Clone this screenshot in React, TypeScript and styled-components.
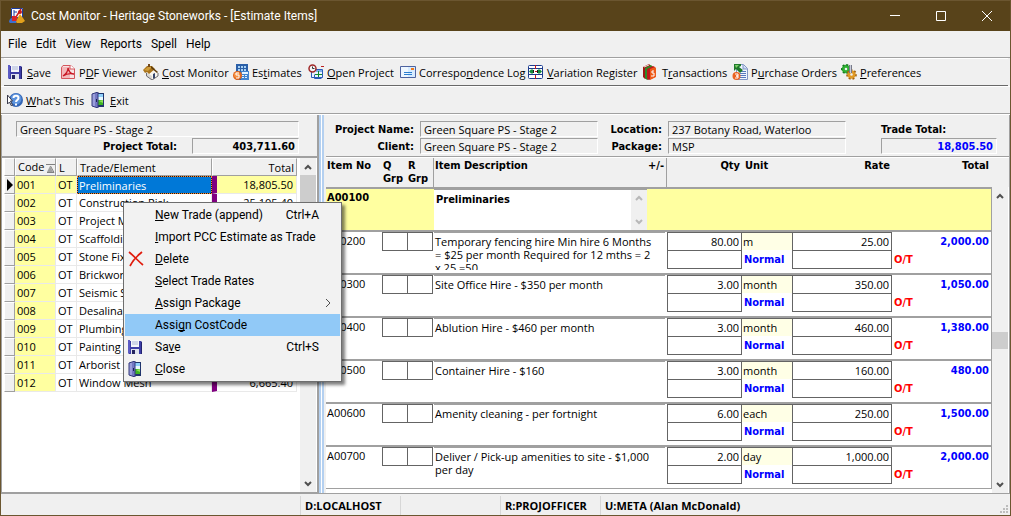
import React from 'react';
import styled, { createGlobalStyle, css } from 'styled-components';

const UI = 'Roboto, "Open Sans", sans-serif';
const GRID = '"Open Sans", "Noto Sans", sans-serif';
const BOLD = '"DejaVu Sans Condensed", "DejaVu Sans", sans-serif';

const Global = createGlobalStyle`
  * { box-sizing: border-box; }
  html, body, #root { height: 100%; }
  body { margin: 0; background: #f0f0f0; color: #000; font-family: ${GRID}; font-size: 11px; line-height: 13px; }
  button, input, textarea { font: inherit; color: inherit; margin: 0; padding: 0; border: 0; background: none; border-radius: 0; }
  textarea { resize: none; display: block; }
  svg { display: block; flex: none; }
  u { text-decoration: underline; text-decoration-thickness: 1px; text-underline-offset: 1px; text-decoration-skip-ink: none; }
`;

/* ---------- icons ---------- */

const SaveIcon = () => (
  <svg width="14" height="16" viewBox="0 0 14 16">
    <path d="M0 1h1l1 1h11l1 1v12H1l-1-1z" fill="#3d3da6" />
    <path d="M0 1h2v13H0z" fill="#5b5bc4" />
    <path d="M3 1h8v7H3z" fill="#f4f6fb" />
    <path d="M4 3h6M4 5h6" stroke="#a9b4d6" />
    <path d="M3 10h8v5H3z" fill="#dfe3ee" />
    <path d="M4 11h3v4H4z" fill="#23235f" />
    <path d="M13 3h1v12h-1z" fill="#23236f" />
  </svg>
);

const DoorIcon = () => (
  <svg width="14" height="16" viewBox="0 0 14 16">
    <path d="M3 1h10v14H3z" fill="#20346c" />
    <path d="M6 2h6v7H6z" fill="#8fd0fb" />
    <path d="M6 5h6v3H6z" fill="#e8f8ff" />
    <path d="M6 8h6v5H6z" fill="#3fb524" />
    <path d="M8 9l4-1v3z" fill="#8fe35a" />
    <path d="M1 2l6-2v16l-6-2z" fill="#7478c4" />
    <path d="M1 2l3-1v14l-3-1z" fill="#9a9ddb" />
    <path d="M1 2l6-2v16l-6-2z" fill="none" stroke="#343a7c" />
    <path d="M5 7h1v3H5z" fill="#1d2252" />
  </svg>
);

const PdfIcon = () => (
  <svg width="16" height="16" viewBox="0 0 16 16">
    <path d="M3 1h8l4 4v9l-1 1H1V4z" fill="#f7e3e3" />
    <path d="M1 3h9v11H1z" fill="#f3b7b9" />
    <path d="M3 1.500h8l3.500 3.500v9.500h-13v-11z" fill="none" stroke="#d4555c" />
    <path d="M10 1v4h5" fill="#fff" stroke="#d4555c" />
    <path d="M3 12c3-2 5-5 5-8 1 4 3 6 6 6-4-1-8 0-11 2z" fill="none" stroke="#c81824" strokeWidth="1.300" />
  </svg>
);

const HouseIcon = () => (
  <svg width="16" height="16" viewBox="0 0 16 16">
    <path d="M3 8l5-5 7 6v3l-6 4-6-4z" fill="#f8f5ee" />
    <path d="M3 8l6 4v4l-6-4z" fill="#d9d6d2" />
    <path d="M0 6l4-4h5l3 3-6 5-2-2-2 1z" fill="#a8731b" />
    <path d="M1 6l4-3h4L5 7z" fill="#cf9c38" />
    <path d="M8 2l7 6-1 1-6-5z" fill="#5b3a0c" />
    <path d="M10 10l2-1v5l-2 1z" fill="#35456a" />
    <path d="M5 0h2v3H5z" fill="#73491a" />
    <path d="M3.500 9v3l5.500 4 6-4V9" fill="none" stroke="#6b6b70" />
  </svg>
);

const EstimateIcon = () => (
  <svg width="16" height="16" viewBox="0 0 16 16">
    <path d="M3 0h12v16H3z" fill="#2a5fa8" />
    <path d="M5 2h2v2H5zM8 2h2v2H8zM11 2h2v2h-2zM5 5h2v2H5zM8 5h2v2H8zM11 5h2v2h-2z" fill="#a8d2f4" />
    <path d="M8 7h8v9H8z" fill="#3f82cf" />
    <path d="M9 8h6v2H9zM9 11h2v1H9zM12 11h2v1h-2zM9 13h2v1H9zM12 13h2v1h-2z" fill="#e2f2ff" />
    <circle cx="4.500" cy="11.500" r="4.500" fill="#e3661c" />
    <circle cx="4" cy="11" r="3" fill="#f59245" />
    <path d="M6 9H3v2h3v3H3" fill="none" stroke="#fff" />
  </svg>
);

const OpenIcon = () => (
  <svg width="16" height="16" viewBox="0 0 16 16">
    <path d="M3.500 5.500h11v8h-11z" fill="#eaf4ff" stroke="#2a5bb8" />
    <path d="M8 6h6v2H8z" fill="#7fb0ee" />
    <path d="M10.500 7v6M7 10.500h7" stroke="#128a2c" />
    <path d="M6.500 10.500v4h7" fill="none" stroke="#2a5bb8" />
    <circle cx="4.500" cy="4.500" r="3.500" fill="#f4f4f4" stroke="#a02828" strokeWidth="1.500" />
    <path d="M4.500 2.500v2h2" fill="none" stroke="#333" />
    <path d="M13 2.500h3" stroke="#b22" />
  </svg>
);

const MailIcon = () => (
  <svg width="16" height="12" viewBox="0 0 16 12">
    <path d="M.500.500h15v11H.500z" fill="#d6ebff" stroke="#4d63a0" />
    <path d="M1 1h7v10H1z" fill="#eef7ff" />
    <path d="M4 6.500h8M4 8.500h8" stroke="#2b7fd0" />
    <path d="M11 2h3v2h-3z" fill="#f07a1c" />
  </svg>
);

const VariationIcon = () => (
  <svg width="15" height="14" viewBox="0 0 15 14">
    <rect x=".500" y=".500" width="14" height="13" rx="1" fill="#fff" stroke="#1d3c8f" />
    <path d="M0 3.500h15M0 9.500h15" stroke="#1d3c8f" />
    <path d="M7.500 0v4M7.500 10v4" stroke="#c4161c" />
    <path d="M1 6.500l2-2h2v4H3zM14 6.500l-2-2h-2v4h2z" fill="#148a3c" />
    <path d="M5 5h1v3H5zM9 5h1v3H9z" fill="#1a1a1a" />
    <path d="M7 6h2v1H7z" fill="#c4161c" />
  </svg>
);

const BooksIcon = () => (
  <svg width="13" height="16" viewBox="0 0 13 16">
    <path d="M0 3l6-3 2 2v10l-6 3-2-2z" fill="#a41414" />
    <path d="M2 4l6-3 2 2v10l-6 3-2-2z" fill="#2e8a26" />
    <path d="M4 5l6-3 2 1v10l-6 3-2-1z" fill="#c01818" />
    <path d="M7 5l5-2 1 1v9l-6 3z" fill="#ee5a18" />
    <path d="M11 7H9v2h2v3H8" fill="none" stroke="#fff" />
    <path d="M1 3l5-2" stroke="#f0e4d8" />
  </svg>
);

const OrderIcon = () => (
  <svg width="16" height="16" viewBox="0 0 16 16">
    <path d="M4.500.500h7l4 4v11h-11z" fill="#f1f6ff" stroke="#8094c4" />
    <path d="M11 1v4h4" fill="#c9d7f2" stroke="#8094c4" />
    <path d="M8 7.500h6M8 9.500h6M8 11.500h6M8 13.500h6" stroke="#5878bc" />
    <path d="M2 0h7v2L7 3l4 3-3 3-4-4-2 2z" fill="#1f7a2a" />
    <path d="M3 1h4L4 4z" fill="#7fd06a" />
    <circle cx="4.500" cy="12" r="4" fill="#ea6220" />
    <path d="M3 10h3v2H4h2v2H3" fill="none" stroke="#fff" />
  </svg>
);

const GearsIcon = () => (
  <svg width="16" height="16" viewBox="0 0 16 16">
    <circle cx="5" cy="5" r="2.800" fill="none" stroke="#2fb034" strokeWidth="3" />
    <circle cx="5" cy="5" r="4.300" fill="none" stroke="#167a20" strokeWidth="1.500" strokeDasharray="2 2" />
    <circle cx="10.500" cy="10.500" r="2.800" fill="none" stroke="#e09a24" strokeWidth="3" />
    <circle cx="10.500" cy="10.500" r="4.600" fill="none" stroke="#a4620c" strokeWidth="1.500" strokeDasharray="2 2" />
    <path d="M8 1h3v8H8z" fill="#777a88" />
    <path d="M9 1h1v8H9z" fill="#c9ccda" />
  </svg>
);

const HelpIcon = () => (
  <svg width="16" height="16" viewBox="0 0 16 16">
    <circle cx="9" cy="8" r="7" fill="#3264b4" />
    <circle cx="9" cy="7" r="5.500" fill="#5b92dc" />
    <path d="M6.500 6c0-3 5-3 5 0 0 2-2.500 2-2.500 4M9 11.500v2" fill="none" stroke="#fff" strokeWidth="2" />
    <path d="M.500 3v9l2-2 2 4 1-1-2-4h2z" fill="#fff" stroke="#3a3a4a" />
  </svg>
);

const DeleteIcon = () => (
  <svg width="16" height="16" viewBox="0 0 16 16">
    <path d="M1 1c5 4 9 9 14 13M14 1C9 5 5 9 2 15" fill="none" stroke="#e01b0c" strokeWidth="1.700" />
  </svg>
);

const AppIcon = () => (
  <svg width="16" height="16" viewBox="0 0 16 16">
    <path d="M2 0h12v9H2z" fill="#fff" />
    <path d="M2.500.500h11v9h-11z" fill="none" stroke="#1b3da0" />
    <path d="M5 2v6M5 4h3" stroke="#1b3da0" />
    <path d="M12 1L7 9" stroke="#c81c1c" strokeWidth="1.500" />
    <circle cx="11" cy="4" r="2" fill="#c81c1c" />
    <path d="M0 14c0-5 7-6 8-1l-1 2H1z" fill="#3c6fd0" />
    <path d="M3 8h5v5H3z" fill="#d8262a" />
    <path d="M7 14l2-5 2-3 3 4 2 3-3 2H8z" fill="#e3a21c" />
  </svg>
);

const Chevron = ({ d, color = '#505050' }: { d: 'up' | 'down' | 'right'; color?: string }) => {
  const path = { up: 'M1 6l3-3 3 3', down: 'M1 2l3 3 3-3', right: 'M2 0l4 4-4 4' }[d];
  return (
    <svg width="8" height="8" viewBox="0 0 8 8">
      <path d={path} fill="none" stroke={color} strokeWidth={d === 'right' ? 1 : 2} />
    </svg>
  );
};

/* ---------- window frame ---------- */

const Window = styled.div`
  min-height: 100%;
  display: flex;
  flex-direction: column;
  border: 1px solid #6b5630;
  background: #f0f0f0;
`;

const TitleBar = styled.header`
  height: 30px;
  display: flex;
  align-items: center;
  gap: 6px;
  padding-left: 8px;
  background: #58431a;
  color: #fff;
  font-family: ${UI};
`;

const Title = styled.h1`
  flex: 1;
  margin: 0;
  font-size: 12px;
  font-weight: 400;
`;

const CaptionButtons = styled.div`
  display: flex;
`;

const CaptionButton = styled.button`
  width: 46px;
  height: 30px;
  display: flex;
  align-items: center;
  justify-content: center;
`;

const MenuBar = styled.nav`
  height: 27px;
  display: flex;
  align-items: center;
  gap: 9px;
  padding-left: 7px;
  border-bottom: 1px solid #a0a0a0;
  font-family: ${UI};
  font-size: 12px;
`;

const ToolBar = styled.div<{ $last?: boolean }>`
  height: 28px;
  display: flex;
  align-items: center;
  margin: ${p => (p.$last ? '0' : '0 2px 0 3px')};
  padding-left: ${p => (p.$last ? '6px' : '4px')};
  border-top: 1px solid #fff;
  border-bottom: 1px solid ${p => (p.$last ? '#a0a0a0' : '#696969')};
`;

const ToolButton = styled.button<{ $w: number }>`
  width: ${p => p.$w}px;
  display: flex;
  align-items: center;
  gap: 3px;
  white-space: nowrap;
`;

const IconSlot = styled.span`
  width: 16px;
  flex: none;
  display: flex;
`;

const Accel = ({ children }: { children: string }) => {
  const [before, rest] = children.split('_');
  if (rest === undefined) return <span>{before}</span>;
  return (
    <span>
      {before}
      <u>{rest[0]}</u>
      {rest.slice(1)}
    </span>
  );
};

/* ---------- panes ---------- */

const Body = styled.main`
  flex: 1;
  display: flex;
  position: relative;
  border-top: 1px solid #fff;
`;

const LeftPane = styled.section`
  width: 318px;
  flex: none;
  display: flex;
  flex-direction: column;
  border-left: 1px solid #a0a0a0;
  border-right: 2px solid #a0a0a0;
`;

const Splitter = styled.div`
  width: 5px;
  flex: none;
  background: #fff;
  border: 2px solid #b4d0f0;
  border-width: 0 2px;
`;

const RightPane = styled.section`
  flex: 1;
  min-width: 0;
  display: flex;
  flex-direction: column;
  padding-left: 2px;
  border-right: 1px solid #a0a0a0;
`;

const Sunken = styled.output<{ $tone?: string }>`
  display: block;
  height: 16px;
  padding: 0 3px;
  line-height: 15px;
  white-space: nowrap;
  border: 1px solid;
  border-color: #a0a0a0 #fff #fff #a0a0a0;
  ${p =>
    p.$tone &&
    css`
      font-family: ${BOLD};
      font-weight: 700;
      text-align: right;
      color: ${p.$tone};
    `}
`;

const Caption = styled.label`
  font-family: ${BOLD};
  font-weight: 700;
  text-align: right;
  white-space: nowrap;
`;

const LeftHead = styled.div`
  height: 41px;
  display: grid;
  grid-template-columns: 1fr 107px;
  grid-template-rows: 16px 16px;
  gap: 1px 15px;
  align-items: center;
  padding: 6px 18px 0 14px;
  & > :first-child { grid-column: 1 / 3; }
`;

const RightHead = styled.div`
  height: 41px;
  display: flex;
  justify-content: space-between;
  padding: 6px 12px 0 8px;
`;

const FieldGrid = styled.div`
  display: grid;
  grid-template-columns: 80px 178px 58px 178px;
  grid-template-rows: 16px 16px;
  gap: 1px 6px;
  align-items: center;
`;

const TradeTotal = styled.div`
  width: 116px;
  display: grid;
  grid-template-rows: 16px 16px;
  gap: 1px;
  align-items: center;
  ${Caption} { text-align: left; }
`;

const Scroll = styled.div`
  width: 16px;
  margin-right: 1px;
  flex: none;
  display: flex;
  flex-direction: column;
  align-items: center;
  background: #f0f0f0;
`;

const ScrollButton = styled.button`
  width: 16px;
  height: 17px;
  flex: none;
  display: flex;
  align-items: center;
  justify-content: center;
`;

const Track = styled.div<{ $before: number; $thumb: number }>`
  flex: 1;
  width: 16px;
  display: flex;
  flex-direction: column;
  &::before { content: ''; flex: ${p => p.$before} 0 0; }
  &::after { content: ''; flex: ${p => 100 - p.$before} 0 0; }
  & > span { height: ${p => p.$thumb}px; background: #cdcdcd; }
`;

/* ---------- trade list ---------- */

const ListArea = styled.div`
  flex: 1;
  display: flex;
  border-top: 2px solid #a0a0a0;
  border-bottom: 1px solid #a0a0a0;
  background: #fff;
  padding-left: 2px;
`;

const ListBody = styled.div`
  flex: 1;
`;

const TradeTable = styled.table`
  width: 293px;
  table-layout: fixed;
  border-collapse: separate;
  border-spacing: 0;
  white-space: nowrap;
  th, td { height: 18px; padding: 0 2px; overflow: hidden; }
`;

const HeadCell = styled.th<{ $right?: boolean }>`
  font-weight: 400;
  text-align: ${p => (p.$right ? 'right' : 'left')};
  background: #f0f0f0;
  border: 1px solid;
  border-color: #fff #a0a0a0 #a0a0a0 #fff;
  svg { display: inline-block; margin-left: 2px; vertical-align: middle; }
`;

const Indicator = styled.td`
  && { padding: 0; }
  background: #f0f0f0;
  border: 1px solid;
  border-color: #fff #a0a0a0 #a0a0a0 #fff;
`;

const Cell = styled.td<{ $yellow?: boolean; $right?: boolean }>`
  background: ${p => (p.$yellow ? '#ffffa0' : '#fff')};
  border-right: 1px solid #e9e9e9;
  border-bottom: 1px solid #e9e9e9;
  ${p =>
    p.$right &&
    css`
      && { padding-right: 3px; }
      text-align: right;
      border-left: 5px solid #800080;
    `}
`;

const PickedCell = styled.td`
  && { padding: 0 1px; }
  background:
    linear-gradient(#0078d7, #0078d7) padding-box,
    linear-gradient(#1d1d1d, #1d1d1d) border-box;
  color: #fff;
  border: 1px dotted #ff8728;
`;

/* ---------- estimate items ---------- */

const Items = styled.div`
  flex: 1;
  display: flex;
  flex-direction: column;
  background: #fff;
  border-top: 1px solid #a0a0a0;
`;

const ItemsScroller = styled.div`
  flex: 1;
  display: flex;
`;

const cols = css`
  display: grid;
  grid-template-columns: 56px 25px 26px 1fr 75px 50px 100px 99px;
`;

const HeadRow = styled.div`
  ${cols}
  height: 30px;
  padding-right: 18px;
  background: #f0f0f0;
  border-top: 1px solid #fff;
  font-family: ${BOLD};
  font-weight: 700;
  & > span { padding: 1px 2px 0 1px; }
`;

const HeadDesc = styled.span`
  display: flex;
  justify-content: space-between;
  border: 1px solid #a0a0a0;
  border-width: 0 1px;
`;

const RightText = styled.span`
  text-align: right;
`;

const UnitHead = styled.span`
  && { padding-left: 3px; }
`;

const ItemList = styled.div`
  flex: 1;
  min-width: 0;
  margin-bottom: 4px;
  border-right: 1px solid #a0a0a0;
  border-bottom: 1px solid #a0a0a0;
`;

const Desc = styled.div`
  display: flex;
  background: #fff;
  margin: 0 2px 0 1px;
  border-top: 1px solid #a0a0a0;
`;

const ItemRow = styled.div<{ $picked?: boolean }>`
  ${cols}
  height: 43px;
  border-top: 2px solid #a0a0a0;
  background: ${p => (p.$picked ? '#ffffa0' : '#fff')};
  ${Desc} { margin-right: ${p => (p.$picked ? '20px' : '2px')}; }
`;

const ItemNo = styled.span<{ $bold?: boolean }>`
  padding: 2px 0 0 1px;
  ${p => p.$bold && css`font-family: ${BOLD}; font-weight: 700;`}
`;

const Box = styled.input`
  width: 100%;
  height: 19px;
  padding: 0 2px;
  border: 1px solid #646464;
  background: #fff;
  text-align: right;
`;

const Grp = styled(Box)`
  width: 26px;
`;

const Stack = styled.div`
  display: flex;
  flex-direction: column;
  ${Box} + ${Box} { margin-top: -1px; }
`;

const UnitStack = styled(Stack)`
  margin: 0 -1px 0 0;
`;

const Unit = styled.input`
  width: 100%;
  height: 18px;
  padding: 0 1px;
  background: #ffffe6;
  border-top: 1px solid #646464;
`;

const Tag = styled.span<{ $color: string }>`
  height: 18px;
  padding: 3px 2px 0;
  font-family: ${BOLD};
  font-weight: 700;
  color: ${p => p.$color};
`;

const Amount = styled(Tag)`
  text-align: right;
`;

const DescText = styled.textarea<{ $bold?: boolean }>`
  flex: 1;
  min-width: 0;
  height: 37px;
  padding: 2px 1px 0;
  overflow: hidden;
  white-space: pre;
  ${p => p.$bold && css`font-family: ${BOLD}; font-weight: 700; padding: 3px 2px 0;`}
`;

const MiniScroll = styled.span`
  width: 16px;
  display: flex;
  flex-direction: column;
  justify-content: space-between;
  align-items: center;
  padding: 4px 0;
  background: #f0f0f0;
`;

/* ---------- context menu ---------- */

const Menu = styled.ul`
  position: absolute;
  left: 122px;
  top: 87px;
  width: 219px;
  margin: 0;
  padding: 1px;
  list-style: none;
  white-space: nowrap;
  background: #f2f2f2;
  border: 1px solid #6e6e6e;
  box-shadow: 3px 3px 3px rgba(0, 0, 0, 0.5);
  font-family: ${UI};
  font-size: 12px;
`;

const MenuItem = styled.button<{ $hot?: boolean }>`
  width: 100%;
  height: 22px;
  display: grid;
  grid-template-columns: 27px 1fr auto 16px;
  align-items: center;
  padding: 0 5px 0 3px;
  text-align: left;
  background: ${p => (p.$hot ? '#91c9f7' : 'transparent')};
`;

const SubMark = styled.span`
  padding-left: 5px;
`;

/* ---------- status bar ---------- */

const Status = styled.footer`
  height: 22px;
  display: flex;
  border-top: 1px solid #a0a0a0;
  font-weight: 700;
`;

const StatusPart = styled.span<{ $w?: number }>`
  ${p => (p.$w ? `width: ${p.$w}px` : 'flex: 1')};
  padding: 3px 4px 0;
  margin-top: 2px;
  border-right: ${p => (p.$w ? '1px solid #d7d7d7' : '0')};
`;

const Grip = styled.svg`
  align-self: flex-end;
  margin: 0 2px 2px 0;
`;

/* ---------- data ---------- */

const tools: [string, number, React.ReactNode][] = [
  ['_Save', 52, <SaveIcon />],
  ['P_DF Viewer', 83, <PdfIcon />],
  ['_Cost Monitor', 90, <HouseIcon />],
  ['Es_timates', 75, <EstimateIcon />],
  ['_Open Project', 92, <OpenIcon />],
  ['Correspo_ndence Log', 128, <MailIcon />],
  ['_Variation Register', 115, <VariationIcon />],
  ['T_ransactions', 89, <BooksIcon />],
  ['P_urchase Orders', 109, <OrderIcon />],
  ['_Preferences', 80, <GearsIcon />],
];

const trades: [string, string, string][] = [
  ['001', 'Preliminaries', '18,805.50'],
  ['002', 'Construction Risk', '25,105.40'],
  ['003', 'Project M', ''],
  ['004', 'Scaffolding', ''],
  ['005', 'Stone Fix', ''],
  ['006', 'Brickwork', ''],
  ['007', 'Seismic S', ''],
  ['008', 'Desalinat', ''],
  ['009', 'Plumbing', ''],
  ['010', 'Painting', ''],
  ['011', 'Arborist', ''],
  ['012', 'Window Mesh', '6,665.40'],
];

const items = [
  ['A00200', 'Temporary fencing hire Min hire 6 Months\n= $25 per month Required for 12 mths = 2\nx 25 =50', '80.00', 'm', '25.00', '2,000.00'],
  ['A00300', 'Site Office Hire - $350 per month', '3.00', 'month', '350.00', '1,050.00'],
  ['A00400', 'Ablution Hire - $460 per month', '3.00', 'month', '460.00', '1,380.00'],
  ['A00500', 'Container Hire - $160', '3.00', 'month', '160.00', '480.00'],
  ['A00600', 'Amenity cleaning - per fortnight', '6.00', 'each', '250.00', '1,500.00'],
  ['A00700', 'Deliver / Pick-up amenities to site - $1,000\nper day', '2.00', 'day', '1,000.00', '2,000.00'],
];

const menu: { label: string; keys?: string; icon?: React.ReactNode; sub?: boolean; hot?: boolean }[] = [
  { label: '_New Trade (append)', keys: 'Ctrl+A' },
  { label: '_Import PCC Estimate as Trade' },
  { label: '_Delete', icon: <DeleteIcon /> },
  { label: '_Select Trade Rates' },
  { label: '_Assign Package', sub: true },
  { label: 'Assi_gn CostCode', hot: true },
  { label: 'Sa_ve', keys: 'Ctrl+S', icon: <SaveIcon /> },
  { label: '_Close', icon: <DoorIcon /> },
];

export default function App() {
  return (
    <>
      <Global />
      <Window>
        <TitleBar>
          <AppIcon />
          <Title>Cost Monitor - Heritage Stoneworks - [Estimate Items]</Title>
          <CaptionButtons>
            <CaptionButton aria-label="Minimize">
              <svg width="10" height="10"><path d="M0 4.500h10" stroke="#fff" /></svg>
            </CaptionButton>
            <CaptionButton aria-label="Maximize">
              <svg width="10" height="10"><path d="M.500.500h9v9h-9z" fill="none" stroke="#fff" /></svg>
            </CaptionButton>
            <CaptionButton aria-label="Close">
              <svg width="10" height="10"><path d="M0 0l10 10M10 0L0 10" stroke="#fff" /></svg>
            </CaptionButton>
          </CaptionButtons>
        </TitleBar>

        <MenuBar>
          {['File', 'Edit', 'View', 'Reports', 'Spell', 'Help'].map(m => (
            <button key={m}>{m}</button>
          ))}
        </MenuBar>

        <ToolBar>
          {tools.map(([label, w, icon]) => (
            <ToolButton key={label} $w={w}>
              <IconSlot>{icon}</IconSlot>
              <Accel>{label}</Accel>
            </ToolButton>
          ))}
        </ToolBar>
        <ToolBar $last>
          <ToolButton $w={84}>
            <IconSlot><HelpIcon /></IconSlot>
            <Accel>_What's This</Accel>
          </ToolButton>
          <ToolButton $w={60}>
            <IconSlot><DoorIcon /></IconSlot>
            <Accel>_Exit</Accel>
          </ToolButton>
        </ToolBar>

        <Body>
          <LeftPane>
            <LeftHead>
              <Sunken aria-label="Project">Green Square PS - Stage 2</Sunken>
              <Caption htmlFor="ptotal">Project Total:</Caption>
              <Sunken id="ptotal" $tone="#000">403,711.60</Sunken>
            </LeftHead>
            <ListArea>
              <ListBody>
                <TradeTable>
                  <colgroup>
                    <col style={{ width: 11 }} />
                    <col style={{ width: 41 }} />
                    <col style={{ width: 21 }} />
                    <col style={{ width: 135 }} />
                    <col />
                  </colgroup>
                  <thead>
                    <tr>
                      <HeadCell />
                      <HeadCell>
                        Code
                        <svg width="9" height="10" viewBox="0 0 9 10">
                          <path d="M0 .500h9" stroke="#808080" />
                          <path d="M4 2l3 6H1z" fill="#a0a0a0" />
                          <path d="M1 8.500h7L4.500 2" fill="none" stroke="#808080" />
                        </svg>
                      </HeadCell>
                      <HeadCell>L</HeadCell>
                      <HeadCell>Trade/Element</HeadCell>
                      <HeadCell $right>Total</HeadCell>
                    </tr>
                  </thead>
                  <tbody>
                    {trades.map(([code, name, total], i) => (
                      <tr key={code}>
                        <Indicator>
                          {i === 0 && (
                            <svg width="8" height="12" viewBox="0 0 8 12">
                              <path d="M2 0l6 6-6 6z" fill="#000" />
                            </svg>
                          )}
                        </Indicator>
                        <Cell $yellow>{code}</Cell>
                        <Cell $yellow={i === 0}>OT</Cell>
                        {i === 0 ? <PickedCell>{name}</PickedCell> : <Cell>{name}</Cell>}
                        <Cell $right $yellow={i === 0}>{total}</Cell>
                      </tr>
                    ))}
                  </tbody>
                </TradeTable>
              </ListBody>
              <Scroll>
                <ScrollButton aria-label="Scroll up"><Chevron d="up" /></ScrollButton>
                <Track $before={0} $thumb={60}><span /></Track>
                <ScrollButton aria-label="Scroll down"><Chevron d="down" /></ScrollButton>
              </Scroll>
            </ListArea>
          </LeftPane>

          <Splitter />

          <RightPane>
            <RightHead>
              <FieldGrid>
                <Caption htmlFor="pname">Project Name:</Caption>
                <Sunken id="pname">Green Square PS - Stage 2</Sunken>
                <Caption htmlFor="loc">Location:</Caption>
                <Sunken id="loc">237 Botany Road, Waterloo</Sunken>
                <Caption htmlFor="client">Client:</Caption>
                <Sunken id="client">Green Square PS - Stage 2</Sunken>
                <Caption htmlFor="pack">Package:</Caption>
                <Sunken id="pack">MSP</Sunken>
              </FieldGrid>
              <TradeTotal>
                <Caption htmlFor="ttotal">Trade Total:</Caption>
                <Sunken id="ttotal" $tone="#0000ff">18,805.50</Sunken>
              </TradeTotal>
            </RightHead>

            <Items>
              <HeadRow>
                <span>Item No</span>
                <span>Q<br />Grp</span>
                <span>R<br />Grp</span>
                <HeadDesc><span>Item Description</span><span>+/-</span></HeadDesc>
                <RightText>Qty</RightText>
                <UnitHead>Unit</UnitHead>
                <RightText>Rate</RightText>
                <RightText>Total</RightText>
              </HeadRow>
              <ItemsScroller>
                <ItemList>
                  <ItemRow $picked>
                    <ItemNo $bold>A00100</ItemNo>
                    <span />
                    <span />
                    <Desc>
                      <DescText $bold aria-label="Description" readOnly value="Preliminaries" />
                      <MiniScroll>
                        <Chevron d="up" color="#b8b8b8" />
                        <Chevron d="down" color="#b8b8b8" />
                      </MiniScroll>
                    </Desc>
                  </ItemRow>
                  {items.map(([no, text, qty, unit, rate, total]) => (
                    <ItemRow key={no}>
                      <ItemNo>{no}</ItemNo>
                      <Grp aria-label="Q group" />
                      <Grp aria-label="R group" />
                      <Desc>
                        <DescText aria-label="Description" readOnly value={text} />
                      </Desc>
                      <Stack>
                        <Box aria-label="Quantity" readOnly value={qty} />
                        <Box aria-label="Quantity note" />
                      </Stack>
                      <UnitStack>
                        <Unit aria-label="Unit" readOnly value={unit} />
                        <Tag $color="#0000ff">Normal</Tag>
                      </UnitStack>
                      <Stack>
                        <Box aria-label="Rate" readOnly value={rate} />
                        <Box aria-label="Rate note" />
                      </Stack>
                      <Stack>
                        <Amount $color="#0000ff">{total}</Amount>
                        <Tag $color="#ff0000">O/T</Tag>
                      </Stack>
                    </ItemRow>
                  ))}
                </ItemList>
                <Scroll>
                  <ScrollButton aria-label="Scroll up"><Chevron d="up" /></ScrollButton>
                  <Track $before={50} $thumb={17}><span /></Track>
                  <ScrollButton aria-label="Scroll down"><Chevron d="down" /></ScrollButton>
                </Scroll>
              </ItemsScroller>
            </Items>
          </RightPane>

          <Menu>
            {menu.map(m => (
              <li key={m.label}>
                <MenuItem $hot={m.hot}>
                  <span>{m.icon}</span>
                  <Accel>{m.label}</Accel>
                  <span>{m.keys}</span>
                  <SubMark>{m.sub && <Chevron d="right" />}</SubMark>
                </MenuItem>
              </li>
            ))}
          </Menu>
        </Body>

        <Status>
          <StatusPart $w={300} />
          <StatusPart $w={100}>D:LOCALHOST</StatusPart>
          <StatusPart $w={100} />
          <StatusPart $w={100}>R:PROJOFFICER</StatusPart>
          <StatusPart>U:META (Alan McDonald)</StatusPart>
          <Grip width="8" height="8" viewBox="0 0 8 8">
            <path d="M6 0h2v2H6zM3 3h2v2H3zM6 3h2v2H6zM0 6h2v2H0zM3 6h2v2H3zM6 6h2v2H6z" fill="#bdbdbd" />
          </Grip>
        </Status>
      </Window>
    </>
  );
}
